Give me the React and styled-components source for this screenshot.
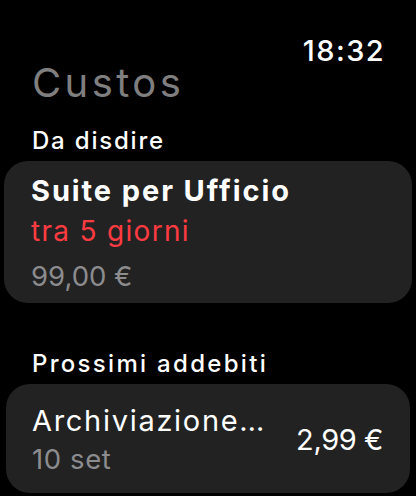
import React from "react";
import styled, { createGlobalStyle } from "styled-components";

const GlobalStyle = createGlobalStyle`
  html, body {
    margin: 0;
    padding: 0;
    background: #000000;
  }
  body {
    font-family: Inter, "Noto Sans", "Liberation Sans", sans-serif;
    -webkit-font-smoothing: antialiased;
  }
`;

const Screen = styled.div`
  width: 416px;
  height: 496px;
  box-sizing: border-box;
  padding-top: 38px;
  display: flex;
  flex-direction: column;
  overflow: hidden;
  color: #ffffff;
`;

const Time = styled.div`
  align-self: flex-end;
  margin-right: 31px;
  font-size: 29px;
  line-height: 26px;
  font-weight: 500;
  letter-spacing: 1.4px;
`;

const Title = styled.h1`
  margin: 0 0 0 32px;
  font-size: 40px;
  line-height: 38px;
  font-weight: 400;
  letter-spacing: 3.4px;
  color: #7f7f7f;
`;

const SectionLabel = styled.div`
  margin: ${(p) => p.$top}px 0 6px 32px;
  font-size: 24px;
  line-height: 28px;
  font-weight: 500;
  letter-spacing: ${(p) => p.$ls}px;
`;

const Card = styled.div`
  margin: 0 ${(p) => p.$inset}px;
  background: #222222;
  border-radius: 24px;
  box-sizing: border-box;
  padding: ${(p) => p.$pad};
  display: flex;
  align-items: center;
  justify-content: space-between;
`;

const Stack = styled.div`
  display: flex;
  flex-direction: column;
  min-width: 0;
`;

const Line = styled.div`
  font-size: ${(p) => p.$size}px;
  line-height: ${(p) => p.$lh}px;
  font-weight: ${(p) => p.$weight || 400};
  color: ${(p) => p.$color || "#ffffff"};
  margin-top: ${(p) => p.$mt || 0}px;
  letter-spacing: ${(p) => p.$ls || 0}px;
  white-space: nowrap;
`;

const Amount = styled.div`
  font-size: 29px;
  line-height: 34px;
  letter-spacing: -0.4px;
  color: #ffffff;
`;

export default function App() {
  return (
    <>
      <GlobalStyle />
      <Screen>
        <Time>18:32</Time>
        <Title>Custos</Title>

        <SectionLabel $top={25} $ls={1.8}>
          Da disdire
        </SectionLabel>
        <Card $inset={4} $pad="10px 27px 6px">
          <Stack>
            <Line $size={29} $lh={40} $weight={700} $ls={1.9}>
              Suite per Ufficio
            </Line>
            <Line $size={28} $lh={40} $ls={1.3} $color="#ff3b42">
              tra 5 giorni
            </Line>
            <Line $size={27.5} $lh={42} $mt={4} $color="#8c8c8f">
              99,00 €
            </Line>
          </Stack>
        </Card>

        <SectionLabel $top={47} $ls={2.3}>
          Prossimi addebiti
        </SectionLabel>
        <Card $inset={6} $pad="18px 27px 15px 26px">
          <Stack>
            <Line $size={29} $lh={38} $ls={1.7}>
              Archiviazione…
            </Line>
            <Line $size={27.5} $lh={38} $ls={0.6} $color="#8c8c8f">
              10 set
            </Line>
          </Stack>
          <Amount>2,99 €</Amount>
        </Card>
      </Screen>
    </>
  );
}
